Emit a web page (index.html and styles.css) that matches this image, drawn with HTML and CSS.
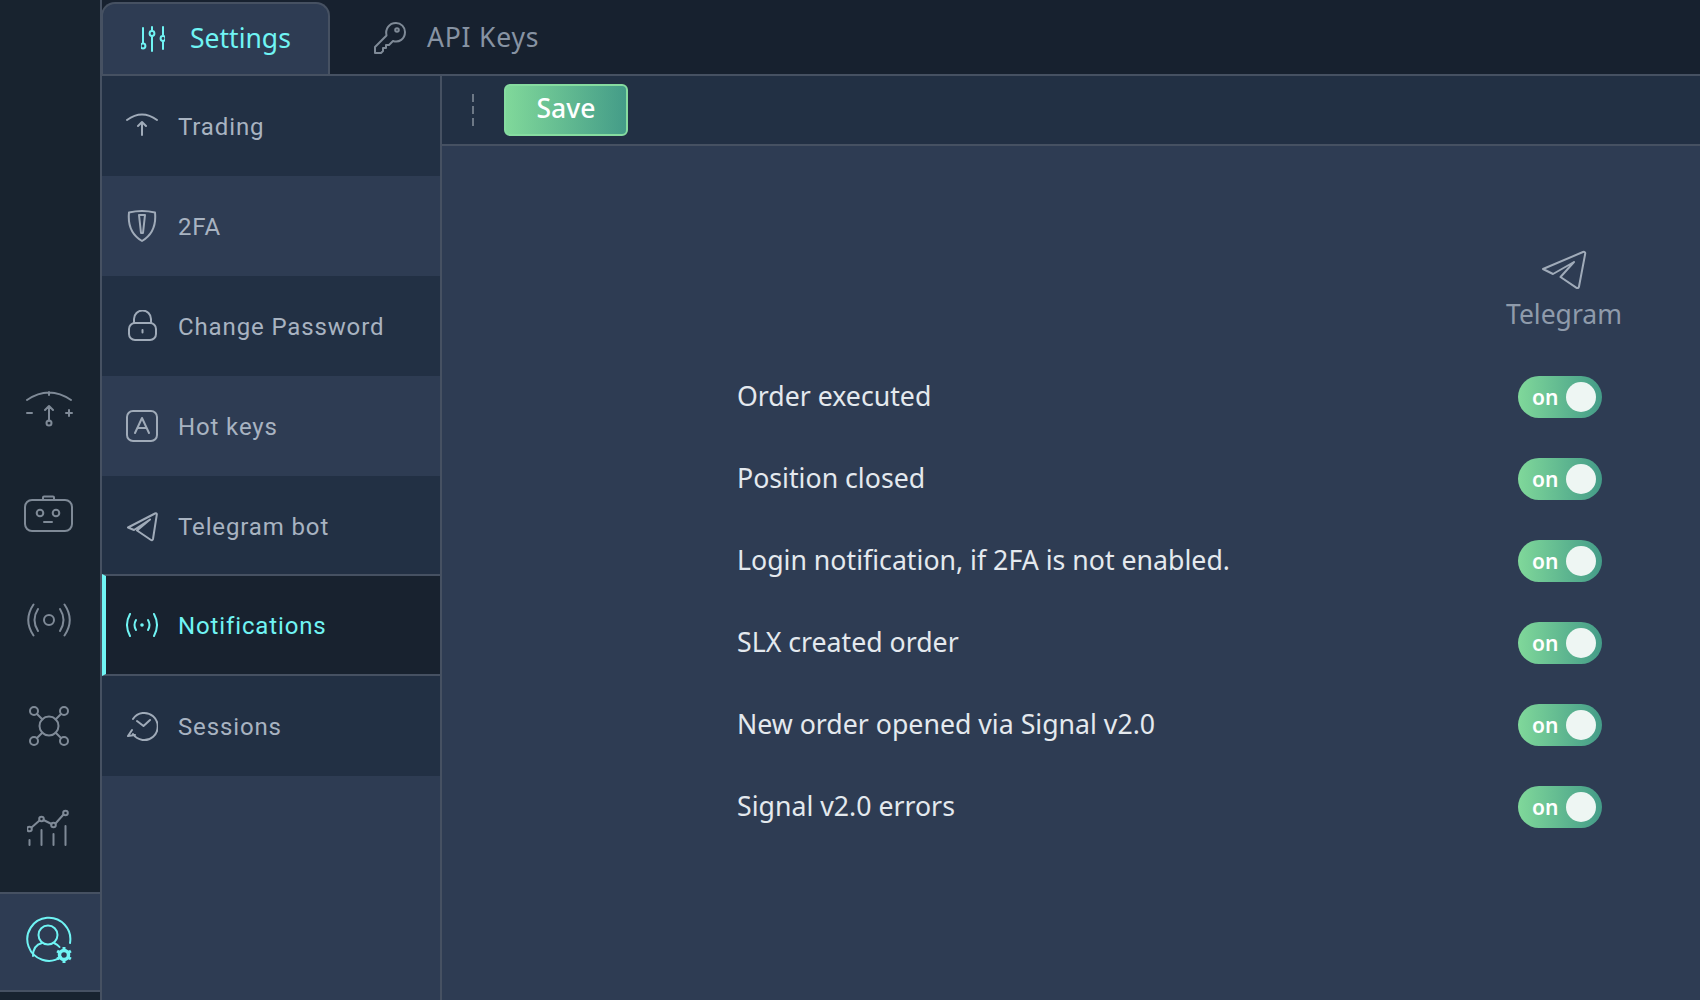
FILE: index.html
```html
<!DOCTYPE html>
<html lang="en">
<head>
<meta charset="utf-8">
<title>Settings</title>
<link rel="stylesheet" href="styles.css">
</head>
<body>
<div class="app">
  <nav class="rail">
    <a class="rail-item">
      <svg class="ri" width="50" height="40" viewBox="0 0 50 40"><path d="M3 12Q25-3 47 12M25 4v3M25 33V18M21 22l4-4 4 4M3 25h5M42 25h6M45 22v6"/><circle cx="25" cy="35" r="2.5"/></svg>
    </a>
    <a class="rail-item">
      <svg class="ri" width="50" height="38" viewBox="0 0 50 38"><rect x="1" y="5" width="47" height="31" rx="7"/><path d="M19 5V2.500a1 1 0 0 1 1-1h9a1 1 0 0 1 1 1V5M20 27h8"/><circle cx="16" cy="18" r="3.300"/><circle cx="32" cy="18" r="3.300"/></svg>
    </a>
    <a class="rail-item">
      <svg class="ri" width="50" height="36" viewBox="0 0 50 36"><circle cx="25" cy="18" r="5"/><path d="M14 7Q7 18 14 29M36 7Q43 18 36 29M9.500 2.500Q-1 18 9.500 33.500M40.500 2.500Q51 18 40.500 33.500"/></svg>
    </a>
    <a class="rail-item">
      <svg class="ri" width="44" height="44" viewBox="0 0 44 44"><circle cx="22" cy="22" r="9.500"/><circle cx="7" cy="7" r="4"/><circle cx="37" cy="7" r="4"/><circle cx="7" cy="37" r="4"/><circle cx="37" cy="37" r="4"/><path d="M10 10l5.500 5.500M34 10l-5.500 5.500M10 34l5.500-5.500M34 34l-5.500-5.500"/></svg>
    </a>
    <a class="rail-item rail-chart">
      <svg class="ri" width="44" height="40" viewBox="0 0 44 40"><path d="M4.500 20.500l8-7M16.500 13l8 4M28.500 16.500l8-9M2.500 33v5M14.500 23v15M26.500 27v11M38.500 19v19"/><circle cx="2.500" cy="22" r="2.300"/><circle cx="14.500" cy="12" r="2.300"/><circle cx="26.500" cy="18" r="2.300"/><circle cx="38.500" cy="6" r="2.300"/></svg>
    </a>
    <a class="rail-item rail-active">
      <svg class="ri-on" width="52" height="50" viewBox="0 0 52 50"><path d="M37 41A21.500 21.500 0 1 1 46 27"/><circle cx="24" cy="19" r="9.500"/><path d="M9 40C9 31 14 28 18 27M30 27c2 1 4 2 5.500 4"/><circle class="gear" cx="40" cy="39" r="4.500"/><path class="gear-t" d="M40 31v3M46.900 35l-2.600 1.500M46.900 43l-2.600-1.500M40 47v-3M33.100 43l2.600-1.500M33.100 35l2.600 1.500"/></svg>
    </a>
  </nav>
  <div class="content">
    <header class="tabs">
      <a class="tab tab-active">
        <svg class="tab-i" width="24" height="26" viewBox="0 0 24 26"><path d="M2 2v15M11 1v3M11 11v14M22 1v8M22 16v7"/><circle cx="2" cy="20" r="2.400"/><circle cx="11" cy="7.500" r="2.400"/><circle cx="22" cy="12.500" r="2.400"/></svg>
        <span>Settings</span>
      </a>
      <a class="tab">
        <svg class="tab-g" width="32" height="32" viewBox="0 0 32 32"><path d="M1 31v-6L12.500 13.500C11 7 15 1 22 1c5 0 9 4 9 9 0 7-6 11-12 9l-4 4h-3v3H9v3l-2 2z"/><circle cx="23" cy="8" r="1.800"/></svg>
        <span>API Keys</span>
      </a>
    </header>
    <div class="body">
      <aside class="side">
        <a class="si si-a">
          <svg class="ic" viewBox="0 0 32 32"><path d="M1 10Q16-1 31 10M16 25V12M12 16l4-4 4 4"/></svg>
          <span>Trading</span>
        </a>
        <a class="si si-b">
          <svg class="ic" viewBox="0 0 32 32"><path d="M3 2.500Q16-.5 29 2.500Q31 22 16 31Q1 22 3 2.500zM13 5h6L17 23h-2z"/></svg>
          <span>2FA</span>
        </a>
        <a class="si si-a">
          <svg class="ic" viewBox="0 0 32 32"><rect x="3" y="13" width="27" height="17" rx="6"/><path d="M8 13V9a8.500 8.500 0 0 1 17 0v4M16.500 20v2.500"/></svg>
          <span>Change Password</span>
        </a>
        <a class="si si-b">
          <svg class="ic" viewBox="0 0 32 32"><rect x="1" y="1" width="30" height="30" rx="6"/><path d="M9 23l7-15 7 15M11.500 18h9"/></svg>
          <span>Hot keys</span>
        </a>
        <a class="si si-a">
          <svg class="ic" viewBox="0 0 32 32"><path d="M2 17.500L29 3.500c1-.5 2 0 1.800 1.200L27 29c-.2 1-1.200 1.500-2 1L11 20.500 24 9.500 8 20z"/></svg>
          <span>Telegram bot</span>
        </a>
        <a class="si si-active">
          <svg class="ic" viewBox="0 0 32 32"><path d="M4 5Q-2 16 4 27M28 5Q34 16 28 27M10 11Q7 16 10 21M22 11Q25 16 22 21"/><circle class="dot" cx="16" cy="16" r="1.800"/></svg>
          <span>Notifications</span>
        </a>
        <a class="si si-a">
          <svg class="ic" viewBox="0 0 32 32"><path d="M7 9A13.500 13.500 0 1 1 7 24M2 26l4-6M2 26l7-1M17.500 16l-6.500-5M17.500 16l6.500-6"/></svg>
          <span>Sessions</span>
        </a>
      </aside>
      <main class="main">
        <div class="toolbar">
          <span class="grip"></span>
          <button class="save">Save</button>
        </div>
        <section class="panel">
          <div class="chan">
            <svg class="chan-i" width="46" height="40" viewBox="0 0 46 40"><path d="M2 19L42 2c1.500-.5 2.500.5 2.200 1.800L38 36.500c-.3 1.500-1.500 2-2.800 1.200L19.500 27 33 12 12 24z"/></svg>
            <span>Telegram</span>
          </div>
          <div class="rows">
            <div class="row"><span class="lbl">Order executed</span><span class="sw">on<i></i></span></div>
            <div class="row"><span class="lbl">Position closed</span><span class="sw">on<i></i></span></div>
            <div class="row"><span class="lbl">Login notification, if 2FA is not enabled.</span><span class="sw">on<i></i></span></div>
            <div class="row"><span class="lbl">SLX created order</span><span class="sw">on<i></i></span></div>
            <div class="row"><span class="lbl">New order opened via Signal v2.0</span><span class="sw">on<i></i></span></div>
            <div class="row"><span class="lbl">Signal v2.0 errors</span><span class="sw">on<i></i></span></div>
          </div>
        </section>
      </main>
    </div>
  </div>
</div>
</body>
</html>
```
FILE: styles.css
```css
* { box-sizing: border-box; }
html, body { margin: 0; height: 100%; overflow: hidden; }
body { background: #17222f; font-family: "Noto Sans", sans-serif; color: #e4e9ee; }
svg { fill: none; stroke-linecap: round; stroke-linejoin: round; display: block; flex: none; }
.app { display: flex; height: 1000px; }

.rail { width: 102px; flex: none; background: #18232f; border-right: 2px solid #465162; display: flex; flex-direction: column; justify-content: flex-end; padding-bottom: 8px; }
.rail-item { height: 106px; padding-right: 3px; display: flex; align-items: center; justify-content: center; flex: none; }
.rail-chart { height: 96px; }
.rail-active { height: 100px; margin-top: 17px; background: #2e3c53; border-top: 2px solid #465162; border-bottom: 2px solid #465162; }
.ri { stroke: #7f8a97; stroke-width: 2; }
.ri-on { stroke: #70f4f4; stroke-width: 2; margin: 0 0 3px 3px; }
.ri-on .gear { stroke-width: 3.500; }
.ri-on .gear-t { stroke-width: 3; stroke-linecap: butt; }

.content { flex: 1; min-width: 0; display: flex; flex-direction: column; }
.tabs { height: 76px; flex: none; display: flex; align-items: stretch; padding-top: 2px; background: #17212f; border-bottom: 2px solid #465162; }
.tab { width: 229px; display: flex; align-items: center; gap: 25px; padding: 0 0 0 38px; font-size: 26.500px; color: #8793a3; margin-left: -1px; }
.tab span { padding-bottom: 3px; }
.tab + .tab { margin-left: 1px; padding-left: 43px; gap: 21px; letter-spacing: .8px; }
.tab-active { color: #70f4f4; background: #2e3c53; border: 2px solid #465162; border-bottom: 0; border-radius: 14px 14px 0 0; }
.tab-i { stroke: #70f4f4; stroke-width: 2; }
.tab-g { stroke: #7f8a97; stroke-width: 2; }

.body { flex: 1; display: flex; min-height: 0; }
.side { width: 340px; flex: none; background: #2e3c53; border-right: 2px solid #465162; }
.si { height: 100px; display: flex; align-items: center; gap: 20px; padding-left: 24px; font-family: "Roboto", sans-serif; font-size: 24px; font-weight: 450; letter-spacing: .87px; color: #a8b3c1; }
.si span { padding-top: 2px; }
.si-a { background: #223044; }
.si-b { background: #2e3c53; }
.si-active { height: 102px; margin-top: -2px; position: relative; background: #18222f; color: #70f4f4; border-top: 2px solid #465162; border-bottom: 2px solid #465162; border-left: 4px solid #70f4f4; padding-left: 20px; }
.ic { width: 32px; height: 32px; stroke: #a0abb9; stroke-width: 2; }
.si-active .ic { stroke: #70f4f4; }
.si-active .dot { fill: #70f4f4; stroke: none; }

.main { flex: 1; min-width: 0; display: flex; flex-direction: column; background: #2e3c53; }
.toolbar { height: 70px; flex: none; display: flex; align-items: center; gap: 30px; padding-left: 30px; background: #223044; border-bottom: 2px solid #465162; }
.grip { width: 2px; height: 32px; background: repeating-linear-gradient(180deg, #6d7886 0 8px, transparent 8px 12px); }
.save { width: 124px; height: 52px; padding: 0 0 5px; border: 2px solid #86dca0; border-radius: 6px; background: linear-gradient(90deg, #80d89a, #449c88); color: #fff; font: 500 26.500px "Noto Sans", sans-serif; }

.panel { flex: 1; padding: 104px 76px 0 295px; display: flex; flex-direction: column; align-items: stretch; }
.chan { align-self: flex-end; width: 120px; display: flex; flex-direction: column; align-items: center; color: #8f9bab; font-size: 26.500px; gap: 6px; height: 106px; }
.chan-i { stroke: #a0abb9; stroke-width: 2; }
.rows { display: flex; flex-direction: column; }
.row { height: 82px; display: flex; align-items: center; justify-content: space-between; font-size: 26.700px; padding-right: 22px; }
.lbl { padding-bottom: 3px; }
.sw { width: 84px; height: 42px; border-radius: 21px; background: linear-gradient(90deg, #80d89a, #449c88); display: flex; align-items: center; justify-content: space-between; padding: 0 6px 0 14px; color: #fff; font-size: 21px; font-weight: 600; }
.sw i { width: 30px; height: 30px; border-radius: 50%; background: #eef6f3; }
```
